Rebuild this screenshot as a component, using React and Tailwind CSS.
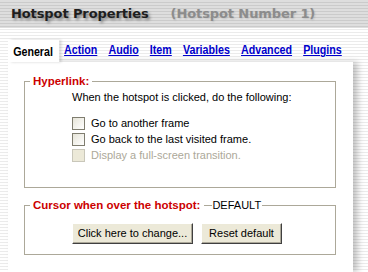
import React from 'react'

const stripes = 'bg-[repeating-linear-gradient(to_bottom,#ffffff_0px,#ffffff_2px,#ebebeb_2px,#ebebeb_3px)]'

function Checkbox({ label, disabled }) {
  return (
    <label className="flex items-center h-[16px]">
      <span
        className={`w-[13px] h-[13px] border ${
          disabled
            ? 'border-[#c9c7ba] bg-[#ece9d8]'
            : 'border-[#7f7d6f] bg-[linear-gradient(135deg,#e6e4d8,#ffffff)]'
        }`}
      />
      <span className={`ml-[6px] ${disabled ? 'text-[#aca899]' : 'text-black'}`}>{label}</span>
    </label>
  )
}

function Button({ children, width }) {
  return (
    <button
      className={`${width} h-[21px] bg-[#ece9d8] text-black text-[11px] border border-t-white border-l-white border-r-[#404040] border-b-[#404040] shadow-[inset_-1px_-1px_0_#aca899]`}
    >
      {children}
    </button>
  )
}

export default function App() {
  const tabs = ['Action', 'Audio', 'Item', 'Variables', 'Advanced', 'Plugins']

  return (
    <div className={`w-[368px] h-[272px] overflow-hidden flex ${stripes}`}>
      {/* left edge */}
      <div className="w-[3px] bg-[#eeecdf]" />

      <div className="flex-1 flex flex-col">
        {/* Header */}
        <div className="h-[28px] flex items-center pl-[11px] gap-[22px] bg-[repeating-linear-gradient(to_bottom,#dedede_0px,#dedede_2px,#cbcbcb_2px,#cbcbcb_3px)] font-['DejaVu_Sans',sans-serif] font-bold text-[13px] tracking-[-0.1px]">
          <span className="text-[#1e1e1e] [text-shadow:2px_2px_3px_rgba(0,0,0,0.45)]">Hotspot Properties</span>
          <span className="text-[#8c8c8c] [text-shadow:1px_1px_2px_rgba(0,0,0,0.12)]">(Hotspot Number 1)</span>
        </div>

        {/* Tabs, drawn with a narrowed bold face */}
        <div className="mt-[12px] ml-[8px] h-[22px] origin-left scale-x-[0.855] flex items-end font-['Liberation_Sans',sans-serif] font-bold text-[12.5px] leading-[15px]">
          <div className="h-[22px] bg-white pl-[6px] pr-[7px] pt-[5px] text-black shadow-[3px_0_3px_rgba(0,0,0,0.18)] relative z-10">
            General
          </div>
          <div className="flex gap-[13px] ml-[6px] pb-[4px]">
            {tabs.map(t => (
              <span key={t} className="text-[#0000cc] underline">{t}</span>
            ))}
          </div>
        </div>

        {/* Panel */}
        <div className="ml-[8px] w-[345px] flex-1 bg-white shadow-[5px_0_6px_rgba(0,0,0,0.22)] pt-[19px] pl-[16px] font-['Liberation_Sans',sans-serif] text-[11px] leading-[13px]">
          <div className="relative w-[312px] h-[107px] border border-[#aca899] pl-[47px] pt-[9px]">
            <div className="absolute top-[-8px] left-[5px] px-[3px] bg-white text-[#cc0000] font-bold text-[11.5px] leading-[14px]">
              Hyperlink:
            </div>
            <div className="text-black">When the hotspot is clicked, do the following:</div>
            <div className="mt-[11px] flex flex-col">
              <Checkbox label="Go to another frame" />
              <Checkbox label="Go back to the last visited frame." />
              <Checkbox label="Display a full-screen transition." disabled />
            </div>
          </div>

          <div className="relative mt-[17px] w-[312px] h-[50px] border border-[#aca899] pl-[47px] pt-[17px]">
            <div className="absolute top-[-8px] left-[5px] pr-[1px] bg-white flex items-center leading-[14px]">
              <span className="pl-[3px] pr-[4px] text-[#cc0000] font-bold text-[11.5px]">Cursor when over the hotspot:</span>
              <span className="w-[8px] h-px bg-[#aca899]" />
              <span className="text-black text-[11px]">DEFAULT</span>
            </div>
            <div className="flex gap-[8px]">
              <Button width="w-[121px]">Click here to change...</Button>
              <Button width="w-[81px]">Reset default</Button>
            </div>
          </div>
        </div>
      </div>

      {/* right edge */}
      <div className="w-px bg-[#f4f3ec]" />
      <div className="w-[2px] bg-[#8d8a78]" />
    </div>
  )
}
